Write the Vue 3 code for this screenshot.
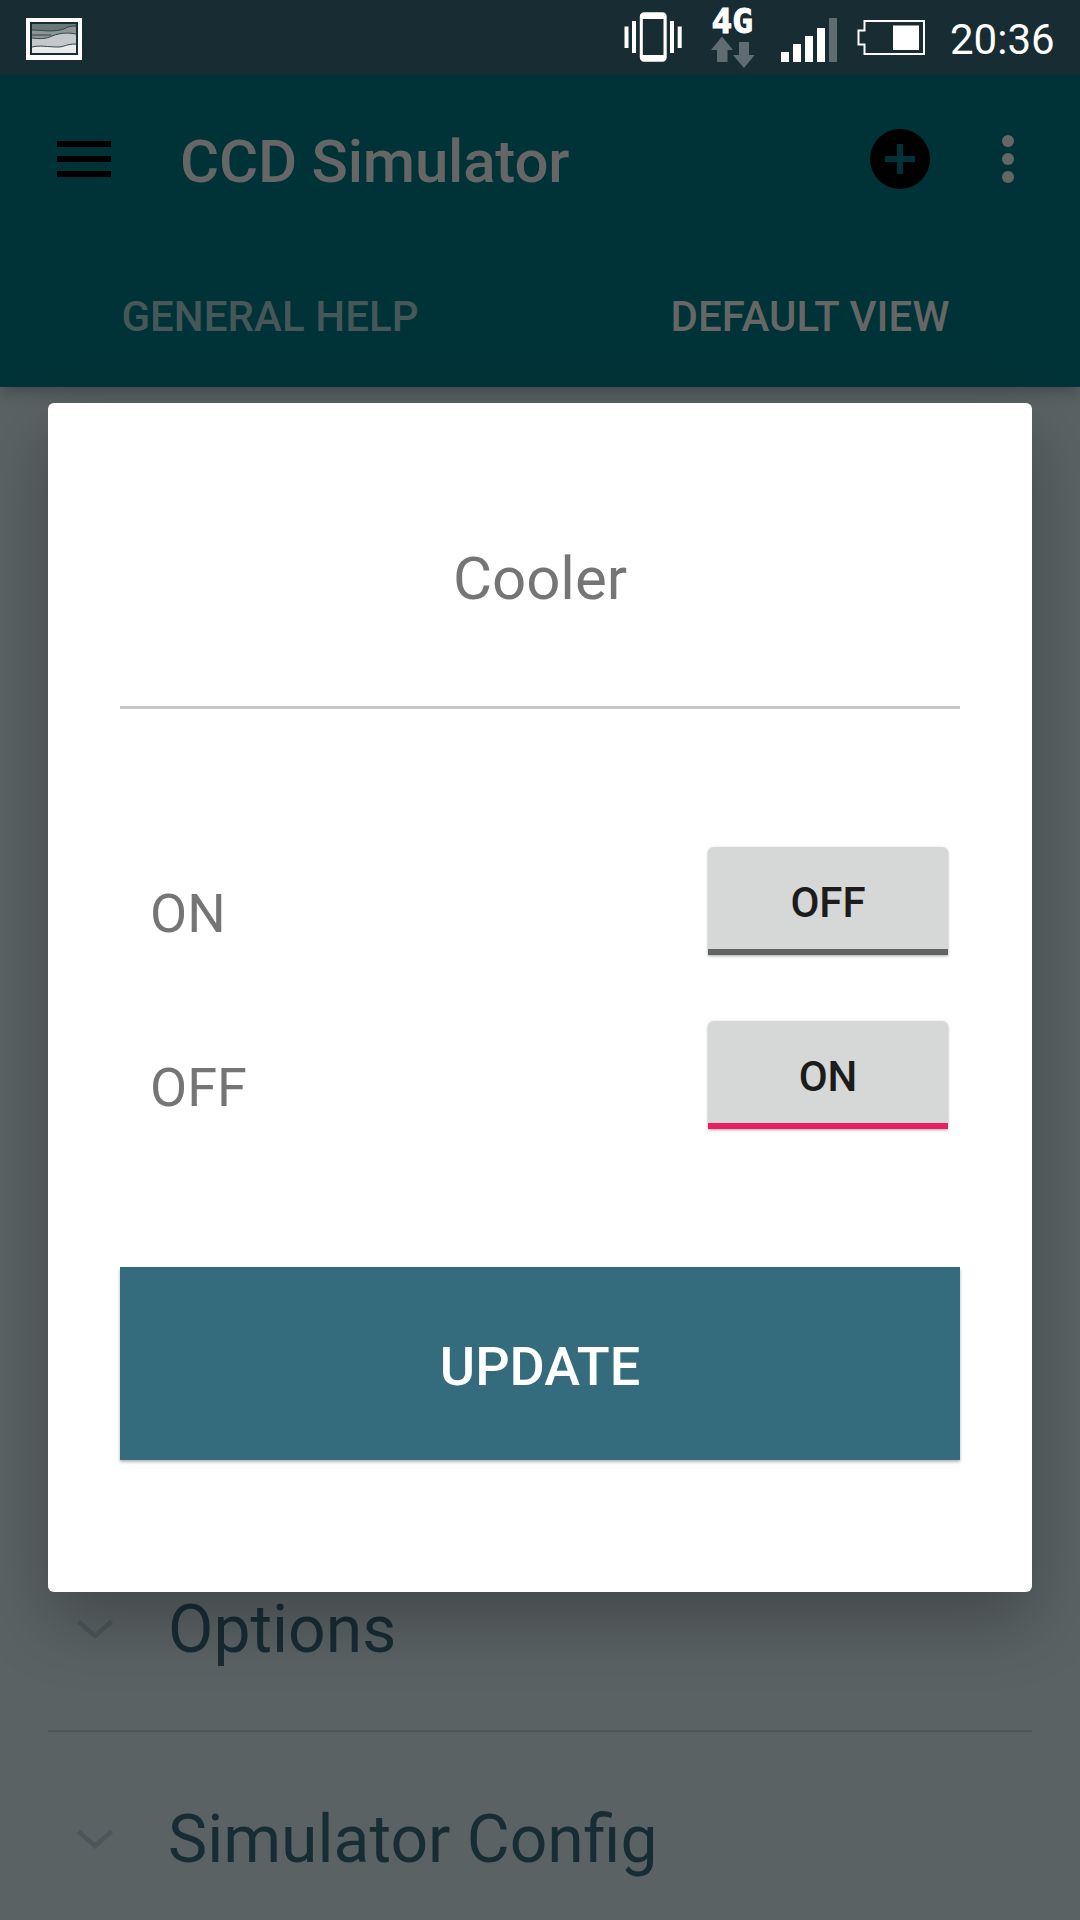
<script setup>
import { ref } from 'vue'

const tabs = [
  { label: 'GENERAL HELP', active: false },
  { label: 'DEFAULT VIEW', active: true },
]
const groups = ['Options', 'Simulator Config']
const switches = ref([
  { name: 'ON', on: false },
  { name: 'OFF', on: true },
])
</script>

<template>
  <div class="screen">
    <div class="status">
      <svg class="picture" width="58" height="44" viewBox="0 0 58 44">
        <rect x="1" y="1" width="56" height="42" fill="#fff" />
        <rect x="5" y="5" width="48" height="33" fill="#182c33" />
        <rect x="7" y="7" width="44" height="29" fill="#6b777b" />
        <path d="M7 13c10 0 18 2 28 0 6-1 6-4 16-4v27H7z" fill="#8b9598" />
        <path d="M7 21c8 1 14 1 20-2 10-4 18-3 24-2v19H7z" fill="#c3c8ca" />
        <path d="M7 30c8-2 16 0 26 0 6 0 8-3 18-3v9H7z" fill="#e8eaeb" />
        <path d="M7 13c10 0 18 2 28 0 6-1 6-4 16-4M7 18h19M7 21c8 1 14 1 20-2 10-4 18-3 24-2M7 30c8-2 16 0 26 0 6 0 8-3 18-3" fill="none" stroke="#32444a" stroke-width="1" />
      </svg>
      <svg class="vibrate" width="58" height="51" viewBox="0 0 58 51">
        <g fill="#fff">
          <rect x=".5" y="14.5" width="4" height="21.5" />
          <rect x="8" y="9" width="4" height="32" />
          <rect x="46" y="9" width="4" height="32" />
          <rect x="53.7" y="14.5" width="4" height="21.5" />
          <path fill-rule="evenodd" d="M20 .2h18.500a4.200 4.200 0 0 1 4.200 4.200v41.200a4.200 4.200 0 0 1-4.200 4.200H20a4.200 4.200 0 0 1-4.200-4.200V4.400A4.200 4.200 0 0 1 20 .2zM18.800 7v36h20.700V7z" />
        </g>
      </svg>
      <div class="network">
        <svg width="46" height="75" viewBox="0 0 46 75">
          <text x="1.500" y="33" textLength="41.500" lengthAdjust="spacingAndGlyphs" class="net-label">4G</text>
          <path d="M12 36.500 23 50h-5.500v12H7V50H1z" fill="#5f6d72" />
          <path d="M29 42h10v13h5.700L34 68 23 55h6z" fill="#5f6d72" />
        </svg>
      </div>
      <svg class="signal" width="56" height="44" viewBox="0 0 56 44">
        <path fill="#fff" d="M0 34h8v10H0zM12 26h8v18h-8zM24 18h8v26h-8zM36 10h8v34h-8z" />
        <path fill="#5f6d72" d="M48 0h8v44h-8z" />
      </svg>
      <svg class="battery" width="69" height="37" viewBox="0 0 69 37">
        <path d="M7.500 2h59.500v33H7.500v-9.500h-6V11.500h6z" fill="none" stroke="#fff" stroke-width="2" />
        <rect x="36" y="6.500" width="26" height="24.500" fill="#fff" />
      </svg>
      <span class="clock">20:36</span>
    </div>

    <header class="appbar">
      <div class="toolbar">
        <svg class="menu" width="72" height="72" viewBox="0 0 24 24">
          <path d="M3 18h18v-2H3v2zm0-5h18v-2H3v2zm0-7v2h18V6H3z" />
        </svg>
        <h1>CCD Simulator</h1>
        <svg class="add" width="72" height="72" viewBox="0 0 24 24">
          <path d="M12 2a10 10 0 1 0 0 20 10 10 0 0 0 0-20zm5 11h-4v4h-2v-4H7v-2h4V7h2v4h4v2z" />
        </svg>
        <svg width="72" height="72" viewBox="0 0 24 24" fill="#666">
          <circle cx="12" cy="6" r="2" />
          <circle cx="12" cy="12" r="2" />
          <circle cx="12" cy="18" r="2" />
        </svg>
      </div>
      <nav class="tabs">
        <span v-for="t in tabs" :key="t.label" class="tab" :class="{ active: t.active }">{{ t.label }}</span>
      </nav>
    </header>

    <main class="list">
      <div v-for="g in groups" :key="g" class="group">
        <svg width="38" height="22" viewBox="0 0 38 22">
          <path d="M2.500 2.500 19 17 35.500 2.500" fill="none" stroke="#4c5558" stroke-width="4.500" />
        </svg>
        <span>{{ g }}</span>
      </div>
    </main>

    <section class="dialog">
      <h2>Cooler</h2>
      <div class="rows">
        <div v-for="s in switches" :key="s.name" class="row">
          <span class="name">{{ s.name }}</span>
          <button class="toggle" :class="{ on: s.on }">{{ s.on ? 'ON' : 'OFF' }}</button>
        </div>
      </div>
      <button class="update">UPDATE</button>
    </section>
  </div>
</template>

<style>
body {
  margin: 0;
  background: #5a6263;
}
</style>

<style scoped>
.screen {
  position: relative;
  width: 1080px;
  height: 1920px;
  display: flex;
  flex-direction: column;
  overflow: hidden;
  background: #5a6263;
  font-family: Roboto, "Liberation Sans", sans-serif;
}
.screen * {
  box-sizing: border-box;
}
svg {
  display: block;
  flex: none;
}
.status {
  height: 75px;
  flex: none;
  display: flex;
  align-items: flex-start;
  background: #182c33;
  position: relative;
  z-index: 1;
}
.picture {
  margin: 17px 0 0 25px;
}
.vibrate {
  margin: 12px 0 0 auto;
}
.network {
  margin-left: 28px;
}
.net-label {
  font: bold 33px "DejaVu Sans Mono", "DejaVu Sans", monospace;
  fill: #fff;
  stroke: #fff;
  stroke-width: 1px;
}
.signal {
  margin: 18px 0 0 25px;
}
.battery {
  margin: 19px 0 0 20px;
}
.clock {
  width: 154px;
  padding-left: 24px;
  font-size: 42px;
  line-height: 79px;
  color: #fff;
}
.appbar {
  height: 312px;
  flex: none;
  background: #003337;
  box-shadow: 0 6px 14px rgba(0, 0, 0, 0.22);
  position: relative;
}
.toolbar {
  height: 168px;
  display: flex;
  align-items: center;
  padding: 0 36px 0 48px;
}
h1 {
  margin: 5px 0 0 60px;
  flex: 1;
  font-size: 60px;
  line-height: 72px;
  font-weight: 500;
  letter-spacing: -0.2px;
  color: #666;
}
.add {
  margin-right: 36px;
}
.tabs {
  height: 144px;
  display: flex;
}
.tab {
  flex: 1;
  text-align: center;
  font-size: 42px;
  font-weight: 500;
  line-height: 147px;
  letter-spacing: 0.08px;
  color: #475759;
}
.tab.active {
  color: #666;
}
.list {
  flex: 1;
  display: flex;
  flex-direction: column;
  padding: 1135px 48px 0;
  min-height: 0;
}
.group {
  height: 210px;
  flex: none;
  display: flex;
  align-items: center;
  gap: 54px;
  padding: 7px 0 0 28px;
  border-bottom: 2px solid #4e5658;
  font-size: 66px;
  line-height: 78px;
  color: #182c33;
}
/* Modal floating above the dimmed page */
.dialog {
  position: absolute;
  left: 48px;
  top: 403px;
  width: 984px;
  height: 1189px;
  padding: 0 72px;
  display: flex;
  flex-direction: column;
  border-radius: 6px;
  background: #fff;
  box-shadow: 0 30px 66px rgba(0, 0, 0, 0.25);
}
h2 {
  margin: 0;
  height: 306px;
  padding-top: 49px;
  border-bottom: 3px solid #c8c8c8;
  text-align: center;
  font-size: 60px;
  font-weight: 400;
  line-height: 254px;
  color: #757575;
}
.rows {
  padding: 105px 12px 0 30px;
}
.row {
  height: 174px;
  display: flex;
  align-items: center;
  justify-content: space-between;
}
.name {
  padding-top: 25px;
  font-size: 54px;
  line-height: 64px;
  color: #757575;
}
button {
  border: 0;
  padding: 0;
  font-family: inherit;
  font-weight: 500;
}
.toggle {
  width: 240px;
  height: 108px;
  padding-top: 9px;
  border-bottom: 6px solid #626463;
  border-radius: 6px 6px 0 0;
  background: #d6d8d7;
  box-shadow: 0 1px 3px rgba(0, 0, 0, 0.35);
  font-size: 42px;
  color: #1c1c1c;
}
.toggle.on {
  border-bottom-color: #e91e63;
}
.update {
  height: 193px;
  margin-top: 105px;
  padding-top: 6px;
  background: #346c7d;
  box-shadow: 0 2px 3px rgba(0, 0, 0, 0.3);
  font-size: 54px;
  color: #fff;
}
</style>
